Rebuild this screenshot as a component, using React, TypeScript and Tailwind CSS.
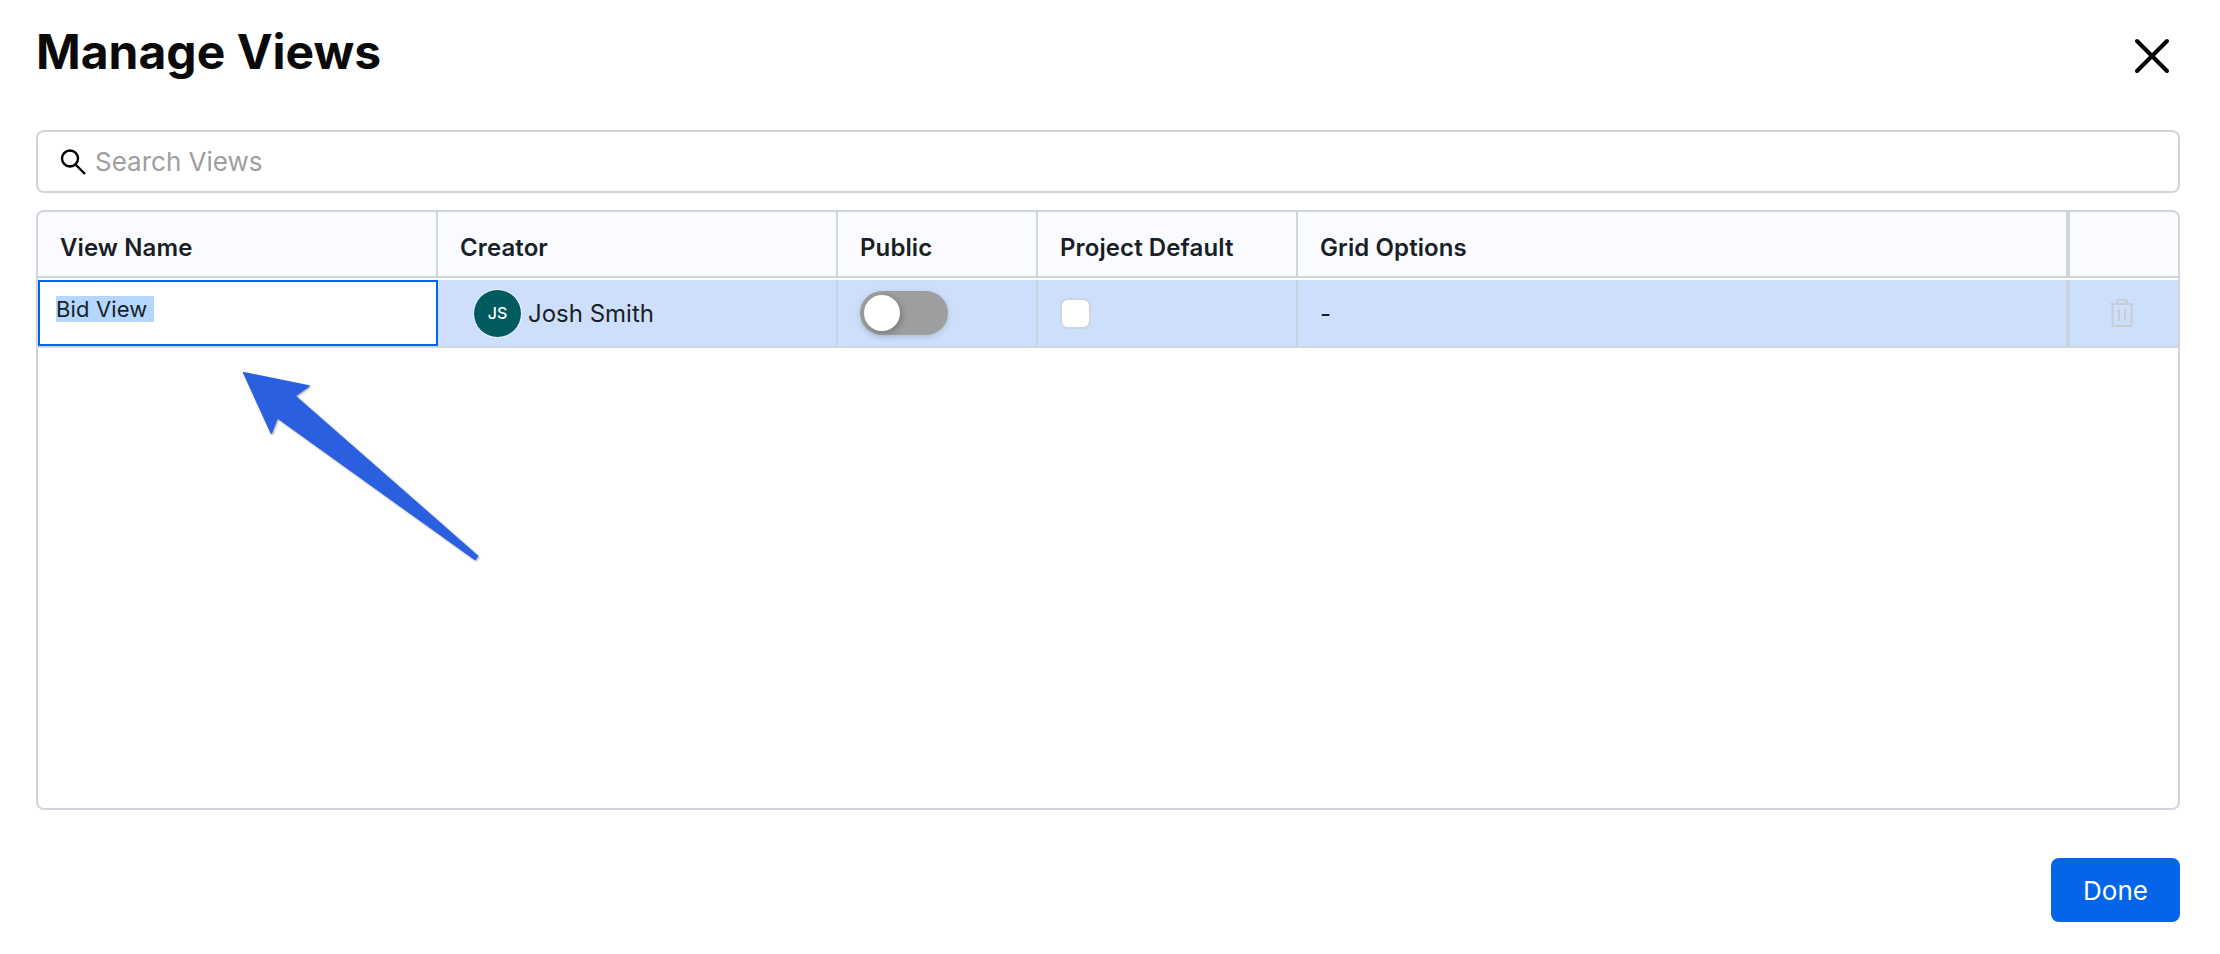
import { X } from 'lucide-react';

function SearchIcon() {
  return (
    <svg width="27" height="26" viewBox="0 0 27 26" fill="none" stroke="#000" strokeWidth="2.400">
      <circle cx="11" cy="9.500" r="8" />
      <path d="M16.500 15.500L26 25" />
    </svg>
  );
}

function TrashIcon() {
  return (
    <svg width="24" height="28" viewBox="0 0 24 28" fill="none" stroke="#c9cdd3" strokeWidth="2">
      <path d="M0 5h24" />
      <path d="M7 5V2.500C7 1.600 7.600 1 8.500 1h7c.9 0 1.500.6 1.500 1.500V5" />
      <path d="M2.500 5v21c0 .6.4 1 1 1h17c.6 0 1-.4 1-1V5" />
      <path d="M9 10v12M15 10v12" />
    </svg>
  );
}

function Arrow() {
  return (
    <svg className="absolute left-[230px] top-[360px]" width="260" height="210" viewBox="230 360 260 210">
      <polygon
        points="243.700,372.700 309,386 295,396 477.500,556 475,559.500 277.300,417.700 271.300,433.300"
        fill="#2a60e0"
        stroke="#2a60e0"
        strokeWidth="1.500"
        strokeLinejoin="round"
        className="drop-shadow-[1px_1px_1px_rgba(0,0,0,0.35)]"
      />
    </svg>
  );
}

const headers = ['View Name', 'Creator', 'Public', 'Project Default', 'Grid Options'];

export default function App() {
  return (
    <div className="relative h-[954px] w-[2220px] overflow-hidden bg-white pl-9 font-['Inter',sans-serif] text-[#1a1f26]">
      <div className="flex h-[130px] w-[2144px] items-start justify-between">
        <h1 className="mt-[24px] text-[48px] leading-[56px] font-bold text-[#0a0a0a]">Manage Views</h1>
        <X className="mt-[26px] mr-[-2px]" size={60} strokeWidth={1.600} color="#000" />
      </div>

      <div className="flex h-[63px] w-[2144px] items-center gap-[9px] rounded-lg border-2 border-[#d0d5dd] pl-[21px]">
        <SearchIcon />
        <span className="text-[26px] text-[#9e9e9e]">Search Views</span>
      </div>

      <div className="mt-[17px] h-[600px] w-[2144px] rounded-lg border-2 border-[#d0d5dd]">
        <div className="grid h-[66px] grid-cols-[400px_400px_200px_260px_772px_108px] rounded-t-lg border-b-2 border-[#d0d5dd] bg-[#f9fbff]">
          {headers.map((h) => (
            <div key={h} className={`flex items-center pt-[7px] pl-[22px] text-[24px] font-semibold tracking-[0.1px] ${h === 'Grid Options' ? 'border-r-4' : 'border-r-2'} border-[#d0d5dd]`}>
              {h}
            </div>
          ))}
          <div />
        </div>

        <div className="mt-[2px] grid h-[68px] grid-cols-[400px_400px_200px_260px_772px_108px] border-b-2 border-[#d0d5dd] bg-[#cddffa]">
          <div className="border-2 border-[#0565e8] bg-white pt-[13px] pl-[16px] text-[22px] leading-[28px]">
            <span className="bg-[#b4d7ff] pr-[6px] tracking-[0.15px]">Bid View</span>
          </div>
          <div className="flex items-center gap-[6px] border-r-2 border-[#c8d2e0] pl-[35px]">
            <span className="flex h-[49px] w-[49px] items-center justify-center rounded-full border border-white bg-[#005a5e] text-[16px] font-medium text-white">JS</span>
            <span className="pt-[2px] text-[24px]">Josh Smith</span>
          </div>
          <div className="flex items-center border-r-2 border-[#c8d2e0] pl-[22px]">
            <div className="flex h-[44px] w-[88px] items-center rounded-full bg-[#9e9e9e] pl-[4px] shadow-[0_2px_6px_rgba(0,0,0,0.15)]">
              <div className="h-[36px] w-[36px] rounded-full bg-white shadow-[2px_2px_6px_rgba(0,0,0,0.25)]" />
            </div>
          </div>
          <div className="flex items-center border-r-2 border-[#c8d2e0] pl-[22px]">
            <div className="h-[31px] w-[31px] rounded-lg border-2 border-[#cfd5df] bg-white" />
          </div>
          <div className="flex items-center border-r-4 border-[#c8d2e0] pt-[2px] pl-[22px] text-[24px]">-</div>
          <div className="flex items-center justify-center pr-[4px]">
            <TrashIcon />
          </div>
        </div>
      </div>

      <div className="mt-[48px] flex w-[2144px] justify-end">
        <button className="h-[64px] w-[129px] rounded-lg bg-[#0565e8] text-[26px] text-white">Done</button>
      </div>

      <Arrow />
    </div>
  );
}
